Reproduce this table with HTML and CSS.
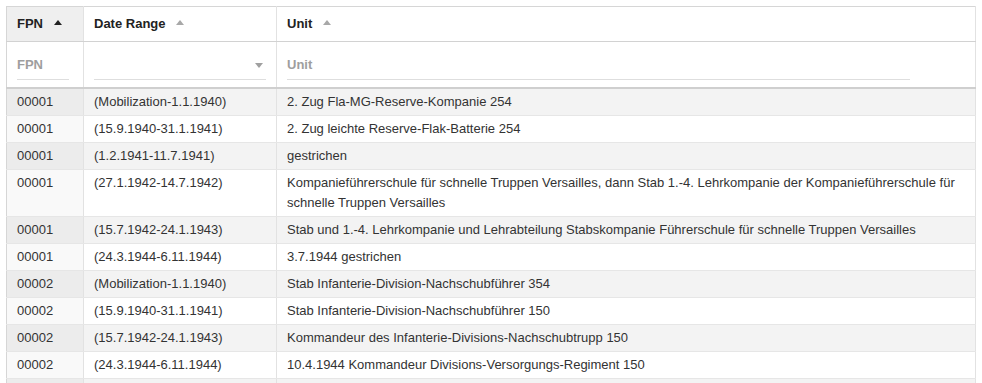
FILE: index.html
```html
<!DOCTYPE html>
<html>
<head>
<meta charset="utf-8">
<link rel="stylesheet" href="styles.css">
</head>
<body>
<div class="page">
  <table class="grid">
    <colgroup>
      <col class="c-fpn">
      <col class="c-date">
      <col class="c-unit">
    </colgroup>
    <thead>
      <tr class="head">
        <th class="sorted">FPN <span class="arrow dark"></span></th>
        <th>Date Range <span class="arrow"></span></th>
        <th>Unit <span class="arrow"></span></th>
      </tr>
      <tr class="filters">
        <th><div class="input w-fpn">FPN</div></th>
        <th><div class="input select"><span class="caret"></span></div></th>
        <th><div class="input w-unit">Unit</div></th>
      </tr>
    </thead>
    <tbody>
      <tr class="odd"><td class="s">00001</td><td>(Mobilization-1.1.1940)</td><td>2. Zug Fla-MG-Reserve-Kompanie 254</td></tr>
      <tr><td class="s">00001</td><td>(15.9.1940-31.1.1941)</td><td>2. Zug leichte Reserve-Flak-Batterie 254</td></tr>
      <tr class="odd"><td class="s">00001</td><td>(1.2.1941-11.7.1941)</td><td>gestrichen</td></tr>
      <tr><td class="s">00001</td><td>(27.1.1942-14.7.1942)</td><td>Kompanieführerschule für schnelle Truppen Versailles, dann Stab 1.-4. Lehrkompanie der Kompanieführerschule für schnelle Truppen Versailles</td></tr>
      <tr class="odd"><td class="s">00001</td><td>(15.7.1942-24.1.1943)</td><td>Stab und 1.-4. Lehrkompanie und Lehrabteilung Stabskompanie Führerschule für schnelle Truppen Versailles</td></tr>
      <tr><td class="s">00001</td><td>(24.3.1944-6.11.1944)</td><td>3.7.1944 gestrichen</td></tr>
      <tr class="odd"><td class="s">00002</td><td>(Mobilization-1.1.1940)</td><td>Stab Infanterie-Division-Nachschubführer 354</td></tr>
      <tr><td class="s">00002</td><td>(15.9.1940-31.1.1941)</td><td>Stab Infanterie-Division-Nachschubführer 150</td></tr>
      <tr class="odd"><td class="s">00002</td><td>(15.7.1942-24.1.1943)</td><td>Kommandeur des Infanterie-Divisions-Nachschubtrupp 150</td></tr>
      <tr><td class="s">00002</td><td>(24.3.1944-6.11.1944)</td><td>10.4.1944 Kommandeur Divisions-Versorgungs-Regiment 150</td></tr>
      <tr class="odd"><td class="s"></td><td></td><td></td></tr>
    </tbody>
  </table>
</div>
</body>
</html>
```
FILE: styles.css
```css
html, body {
  margin: 0;
  padding: 0;
  background: #fff;
}
body {
  font-family: "Liberation Sans", Arial, sans-serif;
  font-size: 13px;
  color: #333;
  overflow: hidden;
}
.page {
  padding: 6px 6px 0 6px;
  border-top: 1px solid #f2f2f2;
  margin-top: -1px;
}
.grid {
  width: 970px;
  border-collapse: collapse;
  table-layout: fixed;
  border: 1px solid #d6d6d6;
}
.c-fpn { width: 77px; }
.c-date { width: 193px; }
.grid th, .grid td {
  text-align: left;
  vertical-align: top;
  border-right: 1px solid #e2e2e2;
  line-height: 20px;
  padding: 3px 10px;
}
.head th {
  font-weight: bold;
  color: #222;
  padding: 7px 10px;
  border-bottom: 1px solid #d2d2d2;
}
.head th.sorted {
  background: #efefef;
}
.arrow {
  display: inline-block;
  width: 0;
  height: 0;
  border-left: 4.5px solid transparent;
  border-right: 4.5px solid transparent;
  border-bottom: 5px solid #a8a8a8;
  margin-left: 7px;
  vertical-align: 3px;
}
.arrow.dark {
  border-bottom-color: #222;
}
.filters th {
  padding: 9px 10px 7px 10px;
  border-bottom: 2px solid #cfcfcf;
}
.input {
  height: 28px;
  line-height: 28px;
  border-bottom: 1px solid #dedede;
  color: #9e9e9e;
  font-weight: bold;
  position: relative;
}
.w-fpn { width: 52px; }
.w-unit { width: 623px; }
.caret {
  position: absolute;
  right: 3px;
  top: 12px;
  width: 0;
  height: 0;
  border-left: 4px solid transparent;
  border-right: 4px solid transparent;
  border-top: 5px solid #a0a0a0;
}
tbody td {
  border-bottom: 1px solid #e6e6e6;
  height: 20px;
}
tbody tr.odd td {
  background: #f3f3f3;
}
tbody td.s {
  background: #f9f9f9;
}
tbody tr.odd td.s {
  background: #ececec;
}
```
